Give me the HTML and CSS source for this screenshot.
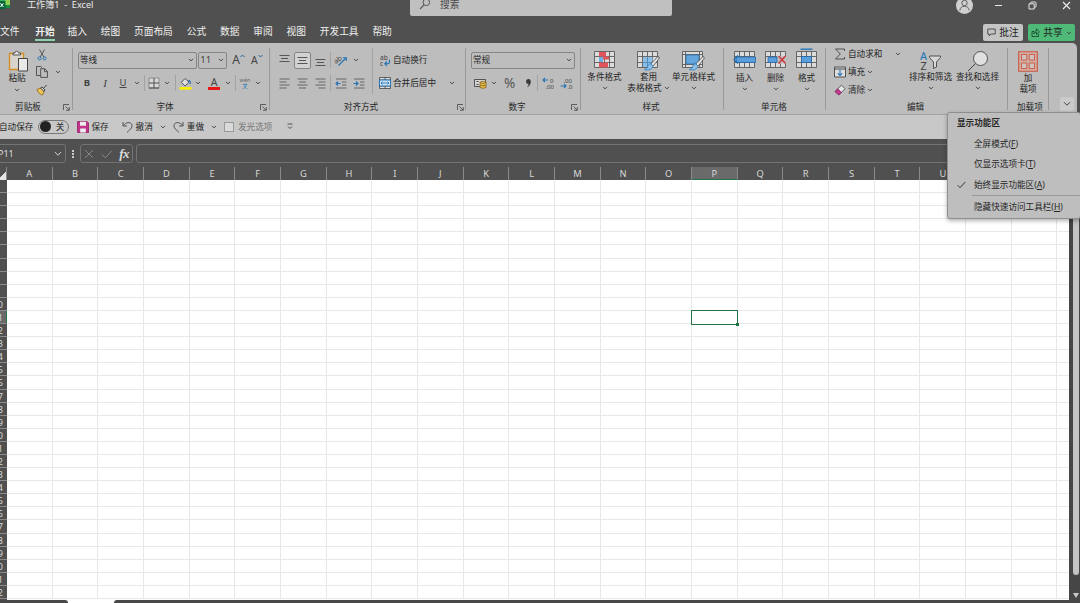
FILE: index.html
```html
<!DOCTYPE html>
<html lang="zh-CN">
<head>
  <meta charset="UTF-8" />
  <meta name="viewport" content="width=device-width, initial-scale=1.0"/>
  <title>工作簿1 - Excel</title>
  <link rel="stylesheet" href="styles.css">
</head>
<body>

  <!-- Shared icons -->
  <svg class="sprite" aria-hidden="true">
    <symbol id="chev" viewBox="0 0 6 4"><path d="M1 .9 3 2.9 5 .9" fill="none" stroke="#3a3a3a" stroke-width=".9"/></symbol>
    <symbol id="launch" viewBox="0 0 7 7"><path d="M.5 6V.5H6M2.500 2.500 6 6M6.300 3v3.300H3" fill="none" stroke="#444" stroke-width=".8"/></symbol>
    <symbol id="table" viewBox="0 0 21 17"><path d="M.5.5h20v16H.5z" fill="#dcdcdc"/><path d="M.5.5h20v16H.5zM.5 5.500h20M.5 11.500h20M5.500.5v16M10.500.5v16M15.500.5v16" fill="none" stroke="#5a5a5a" stroke-width=".9"/></symbol>
    <symbol id="brush" viewBox="0 0 16 15"><path d="M14.300.700 7.300 8l2.200 2.200L15.700 2.500q.3-2-1.400-1.800z" fill="#e2e2e2" stroke="#4a4a4a" stroke-width=".8"/><path d="M7.300 8C5 8 4.400 9.400 4 11c-.3 1.600-1.500 2-3.300 2.400 2 1.200 7.700 1.200 8.800-3.200z" fill="#8cc0e8" stroke="#2f7fbf" stroke-width=".8"/></symbol>
  </svg>

  <!-- Title bar -->
  <header class="titlebar">
    <svg class="logo" width="11" height="10" viewBox="0 0 11 10"><path d="M0 0h10v5H0z" fill="#8fd14f"/><path d="M0 0h5v5H0z" fill="#32b35a"/><path d="M0 5h10v3H0z" fill="#1b8b45"/><path d="M0 1h5.500v8H0z" fill="#08673a"/><path d="m.4 3.300 3 3.700m0-3.700-3 3.700" stroke="#fff" stroke-width="1"/></svg>
    <div class="doc-title">工作簿1 &nbsp;-&nbsp; Excel</div>
    <div class="search">
      <svg width="12" height="12" viewBox="0 0 12 12"><circle cx="7.300" cy="4.300" r="3.300" fill="none" stroke="#555" stroke-width="1"/><path d="M5 6.900 1 11" stroke="#555" stroke-width="1.100"/></svg>
      <span>搜索</span>
    </div>
    <div class="window-controls">
      <svg class="avatar" width="17" height="17" viewBox="0 0 17 17"><circle cx="8.500" cy="8.500" r="8.500" fill="#cfcfcf"/><circle cx="8.500" cy="6" r="2.700" fill="none" stroke="#555" stroke-width=".9"/><path d="M3.800 13.500c.4-3 2.200-4.300 4.700-4.300s4.300 1.300 4.700 4.300" fill="none" stroke="#555" stroke-width=".9"/></svg>
      <svg width="9" height="9" viewBox="0 0 9 9"><path d="M1 4.500h7" stroke="#e8e8e8"/></svg>
      <svg width="9" height="9" viewBox="0 0 9 9"><path d="M1 2.800h5.200V8H1zM2.800 2.600V1.500q0-.5.500-.5h3.700q1 0 1 1v3.700q0 .5-.5.500H6.400" fill="none" stroke="#e8e8e8"/></svg>
      <svg width="9" height="9" viewBox="0 0 9 9"><path d="m1 1 7 7m0-7L1 8" stroke="#eee" stroke-width="1.100"/></svg>
    </div>
  </header>

  <!-- Ribbon tabs -->
  <nav class="tabs">
    <span>文件</span>
    <span class="active">开始</span>
    <span>插入</span>
    <span>绘图</span>
    <span>页面布局</span>
    <span>公式</span>
    <span>数据</span>
    <span>审阅</span>
    <span>视图</span>
    <span>开发工具</span>
    <span>帮助</span>
    <div class="tab-actions">
      <button class="btn-comment">
        <svg width="9" height="9" viewBox="0 0 9 9"><path d="M.8 1h7.400v5H4L2.200 7.800V6H.8z" fill="none" stroke="#333" stroke-width=".8"/></svg>批注
      </button>
      <button class="btn-share">
        <svg width="9" height="9" viewBox="0 0 9 9"><path d="M3 3.500H1v5h6.500V6M2.800 6C3 3.600 4.200 3 5.500 3V1l3 2.800-3 2.700v-2C4.300 4.500 3.500 4.900 2.800 6z" fill="none" stroke="#173d27" stroke-width=".8"/></svg>共享
        <svg width="6" height="4"><use href="#chev"/></svg>
      </button>
    </div>
  </nav>

  <!-- Ribbon -->
  <section class="ribbon">
    <div class="group clipboard">
      <div class="clip-body">
        <div class="paste">
          <svg width="21" height="22" viewBox="0 0 21 22"><path d="M1.500 3.500h14v16h-14z" fill="#d8d4cb" stroke="#d58e22" stroke-width="1.400"/><path d="M5 5V3h2c.3-2.500 3-2.500 3.400 0h2v2z" fill="#e8e8e8" stroke="#444" stroke-width=".9"/><path d="M10.500 8.500h9v12.500h-9z" fill="#e9e9e9" stroke="#444"/></svg>
          <span>粘贴</span>
          <svg width="6" height="4"><use href="#chev"/></svg>
        </div>
        <div class="clip-tools">
          <svg width="10" height="12" viewBox="0 0 10 12"><path d="M2.500.5 6.800 8M7.500.5 3.200 8" stroke="#4a4a4a" stroke-width=".9"/><circle cx="2.500" cy="9.400" r="1.500" fill="none" stroke="#2474b5"/><circle cx="7.500" cy="9.400" r="1.500" fill="none" stroke="#2474b5"/></svg>
          <span></span>
          <svg width="12" height="12" viewBox="0 0 12 12"><path d="M4.500 9.500h-4V.5h4.300L6 1.700M4.700 2.700h4l2.800 2.700v6H4.700zM8.500 2.800v2.900h3" fill="none" stroke="#4a4a4a" stroke-width=".9"/></svg>
          <svg width="6" height="4"><use href="#chev"/></svg>
          <svg width="12" height="12" viewBox="0 0 12 12"><path d="M1 5.500 4.500 4 8 7.500 6.500 11C4 10.600 2 8.500 1 5.500z" fill="#f0c65a" stroke="#8a6210" stroke-width=".8"/><path d="m4.500 4 1.600-1 2.900 3L8 7.500zM7.500 4.300 10.700 1" fill="#ddd" stroke="#444"/></svg>
        </div>
      </div>
      <div class="group-label"><span>剪贴板</span><svg width="7" height="7"><use href="#launch"/></svg></div>
    </div>

    <div class="group font">
      <div class="row">
        <div class="select font-name">等线<svg width="6" height="4"><use href="#chev"/></svg></div>
        <div class="select font-size">11<svg width="6" height="4"><use href="#chev"/></svg></div>
        <span class="grow-font">A<svg width="5" height="4" viewBox="0 0 5 4"><path d="m.5 3 2-2 2 2" fill="none" stroke="#2467a5"/></svg></span>
        <span class="grow-font small">A<svg width="5" height="4" viewBox="0 0 5 4"><path d="m.5 1 2 2 2-2" fill="none" stroke="#2467a5"/></svg></span>
      </div>
      <div class="row font-tools">
        <b>B</b>
        <em>I</em>
        <u>U</u>
        <svg width="6" height="4"><use href="#chev"/></svg>
        <i class="sep"></i>
        <svg width="12" height="12" viewBox="0 0 12 12"><path d="M1 1h10v10H1z" fill="#d6d6d6" stroke="#777" stroke-width=".7"/><path d="M6 1v10M1 6h10M1 11h10" stroke="#444" stroke-width=".9"/></svg>
        <svg width="6" height="4"><use href="#chev"/></svg>
        <i class="sep"></i>
        <svg width="13" height="13" viewBox="0 0 13 13"><path d="m6 1.500 4 3.700L6 9 2.300 5.300z" fill="#ddd" stroke="#444" stroke-width=".9"/><path d="M9.300 3.500c2 .2 2.200 2 1.800 3.700" fill="none" stroke="#2474b5" stroke-width="1.300"/><path d="M.5 10h12v2.700H.5z" fill="#f5f000"/></svg>
        <svg width="6" height="4"><use href="#chev"/></svg>
        <span class="font-color">A</span>
        <svg width="6" height="4"><use href="#chev"/></svg>
        <i class="sep"></i>
        <span class="phonetic"><small>wén</small><small>文</small></span>
        <svg width="6" height="4"><use href="#chev"/></svg>
      </div>
      <div class="group-label"><span>字体</span><svg width="7" height="7"><use href="#launch"/></svg></div>
    </div>

    <div class="group align">
      <div class="align-body">
        <div class="align-grid">
          <svg width="11" height="11" viewBox="0 0 11 11"><path d="M.5 .5h10M2 3.500h7M.5 6.500h10" stroke="#555"/></svg>
          <span class="boxed"><svg width="11" height="11" viewBox="0 0 11 11"><path d="M.5 2.500h10M2 5.500h7M.5 8.500h10" stroke="#555"/></svg></span>
          <svg width="11" height="11" viewBox="0 0 11 11"><path d="M.5 4.500h10M2 7.500h7M.5 10.500h10" stroke="#555"/></svg>
          <i class="sep"></i>
          <svg width="12" height="12" viewBox="0 0 12 12"><text x="-1" y="8" font-size="7" fill="#444" transform="rotate(-35 3 6)">ab</text><path d="M3.500 11.500 11 4M8 3.700h3.300V7" fill="none" stroke="#2474b5" stroke-width="1.100"/></svg>
          <svg width="6" height="4"><use href="#chev"/></svg>

          <svg width="11" height="11" viewBox="0 0 11 11"><path d="M.5 1h10M.5 4h7M.5 7h10M.5 10h7" stroke="#666"/></svg>
          <svg width="11" height="11" viewBox="0 0 11 11"><path d="M.5 1h10M2 4h7M.5 7h10M2 10h7" stroke="#666"/></svg>
          <svg width="11" height="11" viewBox="0 0 11 11"><path d="M.5 1h10M3.500 4h7M.5 7h10M3.500 10h7" stroke="#666"/></svg>
          <i class="sep"></i>
          <svg width="12" height="11" viewBox="0 0 12 11"><path d="M1 1h10.500M7 4h4.500M7 7h4.500M1 10h10.500" stroke="#666"/><path d="M5.500 5.500H1M3 3.500l-2 2 2 2" fill="none" stroke="#2474b5" stroke-width="1.100"/></svg>
          <svg width="12" height="11" viewBox="0 0 12 11"><path d="M1 1h10.500M7 4h4.500M7 7h4.500M1 10h10.500" stroke="#666"/><path d="M.5 5.500H5M3 3.500l2 2-2 2" fill="none" stroke="#2474b5" stroke-width="1.100"/></svg>
        </div>
        <i class="sep tall"></i>
        <div class="align-side">
          <div class="row">
            <svg width="12" height="13" viewBox="0 0 12 13"><text x="1" y="5.800" font-size="6.500" fill="#444">ab</text><text x="1" y="12" font-size="6.500" fill="#444">c</text><path d="M10.500 5.500v2.300q0 2-2 2H6M8 7.500 5.800 9.800 8 12" fill="none" stroke="#2474b5" stroke-width="1.100"/></svg>
            <span>自动换行</span>
          </div>
          <div class="row">
            <svg width="12" height="12" viewBox="0 0 12 12"><path d="M.5.5h11v11H.5zM.5 3h11M.5 9h11M6 .5V3M6 9v2.500" fill="#dcdcdc" stroke="#444" stroke-width=".8"/><path d="M.5 3h11v6H.5z" fill="#d3e4f2" stroke="#2474b5"/><path d="M2 6h8M3.500 4.500 2 6l1.500 1.500M8.500 4.500 10 6 8.500 7.500" fill="none" stroke="#2474b5" stroke-width=".9"/></svg>
            <span>合并后居中</span>
            <svg class="push" width="6" height="4"><use href="#chev"/></svg>
          </div>
        </div>
      </div>
      <div class="group-label"><span>对齐方式</span><svg width="7" height="7"><use href="#launch"/></svg></div>
    </div>

    <div class="group number">
      <div class="row"><div class="select">常规<svg width="6" height="4"><use href="#chev"/></svg></div></div>
      <div class="row number-tools">
        <svg width="13" height="11" viewBox="0 0 13 11"><path d="M.5 1.500h11v7H.5z" fill="#d6d6d6" stroke="#444" stroke-width=".9"/><path d="M2.500 3.500h2M2.500 6.500h2" stroke="#444"/><ellipse cx="9" cy="4.500" rx="3" ry="1.200" fill="#efd27a" stroke="#7b5a10" stroke-width=".7"/><path d="M6 4.500v5q3 1.700 6 0v-5q-3 1.700-6 0zM6 7q3 1.700 6 0" fill="#e6bc4d" stroke="#7b5a10" stroke-width=".7"/></svg>
        <svg width="6" height="4"><use href="#chev"/></svg>
        <span class="percent">%</span>
        <svg width="7" height="10" viewBox="0 0 7 10"><path d="M5.800 3.200q.3 4-3.800 6 1.500-1.700 1.600-3.300A2.400 2.400 0 1 1 5.800 3.200z" fill="#3a3a3a"/></svg>
        <i class="sep"></i>
        <svg width="13" height="12" viewBox="0 0 13 12"><text x="8" y="5.500" font-size="6" fill="#444">0</text><text x="3.500" y="11.500" font-size="6" fill="#444">.00</text><path d="M6 3H1M3 1 1 3l2 2" fill="none" stroke="#2474b5" stroke-width="1.100"/></svg>
        <svg width="13" height="12" viewBox="0 0 13 12"><text x="3.500" y="5.500" font-size="6" fill="#444">.00</text><text x="7.500" y="11.500" font-size="6" fill="#444">.0</text><path d="M.5 9H6M4 7l2 2-2 2" fill="none" stroke="#2474b5" stroke-width="1.100"/></svg>
      </div>
      <div class="group-label"><span>数字</span><svg width="7" height="7"><use href="#launch"/></svg></div>
    </div>

    <div class="group styles">
      <div class="big-row">
        <div class="big">
          <svg width="21" height="20" viewBox="0 0 21 20"><use href="#table" width="21" height="17"/><path d="M5 1h7v4.500H5zM5 11.500h9v5H5z" fill="#e2545b"/><path d="M8 5.500h7v3H8z" fill="#e2545b"/><path d="M5 6h4v5H5z" fill="#6baedf"/></svg>
          <span>条件格式</span>
          <svg width="6" height="4"><use href="#chev"/></svg>
        </div>
        <div class="big">
          <svg width="23" height="20" viewBox="0 0 23 20"><use href="#table" width="21" height="17"/><path d="M6 6h9.500v10H6z" fill="#8dbfe6"/><path d="M5.500 11.500h10M10.500 5.500v11" stroke="#4c86b5" stroke-width=".9"/><use href="#brush" x="6" y="5" width="17" height="15"/></svg>
          <span>套用</span>
          <span class="second">表格格式<svg width="6" height="4"><use href="#chev"/></svg></span>
        </div>
        <div class="big">
          <svg width="23" height="20" viewBox="0 0 23 20"><path d="M.5.5h20v16H.5zM.5 3.500h20M.5 13.500h20M3.500.5v16M17.500.5v16" fill="#dcdcdc" stroke="#5a5a5a" stroke-width=".9"/><path d="M4 4h13v9H4z" fill="#62a6dd" stroke="#2d6ca3" stroke-width=".7"/><use href="#brush" x="6" y="5" width="17" height="15"/></svg>
          <span>单元格样式</span>
          <svg width="6" height="4"><use href="#chev"/></svg>
        </div>
      </div>
      <div class="group-label"><span>样式</span></div>
    </div>

    <div class="group cells">
      <div class="big-row">
        <div class="big">
          <svg width="23" height="20" viewBox="0 0 23 20"><use href="#table" x="1" width="21" height="17"/><path d="M3 6h19.500v5.500H3z" fill="#5a9fdb" stroke="#2467a5" stroke-width=".8"/><path d="M5 4.500 1 8.500l4 4" fill="none" stroke="#1f6aaa" stroke-width="1.200"/></svg>
          <span>插入</span>
          <svg width="6" height="4"><use href="#chev"/></svg>
        </div>
        <div class="big">
          <svg width="23" height="20" viewBox="0 0 23 20"><use href="#table" x="1" width="21" height="17"/><path d="M13 5h10v7.500H13z" fill="#bdbdbd"/><path d="M4 6h9v5.500H4z" fill="#5a9fdb" stroke="#2467a5" stroke-width=".8"/><path d="m14.500 5 7 7.500m0-7.500-7 7.500" stroke="#cf3034" stroke-width="1.300"/></svg>
          <span>删除</span>
          <svg width="6" height="4"><use href="#chev"/></svg>
        </div>
        <div class="big">
          <svg width="21" height="20" viewBox="0 0 21 20"><use href="#table" width="21" height="17"/><path d="M5.500 5.500h10v6h-10z" fill="#5a9fdb" stroke="#2467a5" stroke-width=".8"/><path d="M4.500-1.800h12" stroke="#2474b5" stroke-width="1.400"/></svg>
          <span>格式</span>
          <svg width="6" height="4"><use href="#chev"/></svg>
        </div>
      </div>
      <div class="group-label"><span>单元格</span></div>
    </div>

    <div class="group editing">
      <div class="edit-body">
        <div class="edit-list">
          <div><svg width="12" height="12" viewBox="0 0 12 12"><path d="M10.500 3V1H1.500l4.800 5-4.800 5h9V9" fill="none" stroke="#444" stroke-width=".9"/></svg><span>自动求和</span><svg class="push" width="6" height="4"><use href="#chev"/></svg></div>
          <div><svg width="12" height="12" viewBox="0 0 12 12"><path d="M.5 1h11v10H.5z" fill="#dedede" stroke="#444" stroke-width=".9"/><path d="M.5 3h11" stroke="#444"/><path d="M6 4v5.500M3.800 7.300 6 9.500l2.200-2.200" fill="none" stroke="#2474b5" stroke-width="1.100"/></svg><span>填充</span><svg width="6" height="4"><use href="#chev"/></svg></div>
          <div><svg width="12" height="12" viewBox="0 0 12 12"><path d="M7.500 1.200 11 4.700 5 11 1 7.500z" fill="#e6e6e6" stroke="#444" stroke-width=".8"/><path d="M3.700 4.800 7.500 8.500 5 11 1 7.500z" fill="#c13a8d" stroke="#8d2465" stroke-width=".8"/></svg><span>清除</span><svg width="6" height="4"><use href="#chev"/></svg></div>
        </div>
        <div class="big">
          <svg width="21" height="20" viewBox="0 0 21 20"><text x="0" y="8.500" font-size="11" fill="#2474b5">A</text><text x="0.500" y="18.500" font-size="11" fill="#444">Z</text><path d="M9.500 5h11v1.500l-4 4.500v5l-3 1.500V11l-4-4.500z" fill="#d8d8d8" stroke="#444" stroke-width=".9"/></svg>
          <span>排序和筛选</span>
          <svg width="6" height="4"><use href="#chev"/></svg>
        </div>
        <div class="big">
          <svg width="21" height="20" viewBox="0 0 21 20"><circle cx="13.500" cy="7.500" r="7" fill="#e0e0e0" stroke="#444" stroke-width=".9"/><path d="M8.500 12.500 1 20" stroke="#444"/></svg>
          <span>查找和选择</span>
          <svg width="6" height="4"><use href="#chev"/></svg>
        </div>
      </div>
      <div class="group-label"><span>编辑</span></div>
    </div>

    <div class="group addins">
      <div class="big">
        <svg width="20" height="21" viewBox="0 0 20 21"><path d="M.7.700h18.600v19.600H.7z" fill="#d3aca2" stroke="#cc5540" stroke-width="1.100"/><path d="M3.500 3.500h5.300V9H3.500zM11.200 3.500h5.300V9h-5.300zM3.500 12h5.300v5.500H3.500zM11.200 12h5.300v5.500h-5.300z" fill="#d0c4c1" stroke="#cc5540" stroke-width=".9"/></svg>
        <span>加</span>
        <span class="second">载项</span>
      </div>
      <div class="group-label"><span>加载项</span></div>
    </div>

    <button class="collapse" aria-label="功能区显示选项"><svg width="8" height="6" viewBox="0 0 8 6"><path d="m1 1.200 3 3 3-3" fill="none" stroke="#333" stroke-width=".9"/></svg></button>
  </section>

  <!-- Quick access toolbar -->
  <section class="quick">
    <span class="autosave">自动保存</span>
    <span class="toggle">关</span>
    <svg width="12" height="12" viewBox="0 0 12 12"><path d="M.5.500h9.500L11.500 2v9.500H.5z" fill="#c2338a" stroke="#8f1e64" stroke-width=".8"/><path d="M3 .8h6v4H3zM3.200 7.500h5.600v4H3.200z" fill="#ededed"/></svg>
    <span class="q-save">保存</span>
    <svg width="11" height="12" viewBox="0 0 11 12"><path d="M1 1v4h4M1.300 4.700C4 .8 8.500.8 9.800 3.500c1 2.500-.8 4.200-4.800 8" fill="none" stroke="#444" stroke-width=".9"/></svg>
    <span class="q-undo">撤消</span>
    <svg width="6" height="4"><use href="#chev"/></svg>
    <svg class="q-redo" width="11" height="12" viewBox="0 0 11 12"><path d="M10 1v4H6M9.700 4.700C7 .8 2.500.8 1.200 3.500c-1 2.500.8 4.200 4.800 8" fill="none" stroke="#444" stroke-width=".9"/></svg>
    <span class="q-redo-text">重做</span>
    <svg width="6" height="4"><use href="#chev"/></svg>
    <i class="check"></i>
    <span class="muted">发光选项</span>
    <svg width="6" height="7" viewBox="0 0 6 7"><path d="M.5 1h5M1 3.500l2 2 2-2" fill="none" stroke="#444" stroke-width=".9"/></svg>
  </section>

  <!-- Formula bar -->
  <section class="formula">
    <div class="name-box">P11<svg width="8" height="6" viewBox="0 0 8 6"><path d="m1 1 3 3.300L7 1" fill="none" stroke="#ccc"/></svg></div>
    <i class="dots"></i>
    <div class="fx-box">
      <svg width="10" height="10" viewBox="0 0 10 10"><path d="m1 1 8 8m0-8L1 9" stroke="#8c8c8c" stroke-width=".9"/></svg>
      <svg width="12" height="10" viewBox="0 0 12 10"><path d="m1 5.500 3.300 3.300L11 1.500" fill="none" stroke="#8c8c8c" stroke-width=".9"/></svg>
      <em>fx</em>
    </div>
    <div class="formula-input"></div>
  </section>

  <!-- Sheet -->
  <main class="sheet">
    <div class="col-heads" id="colHeads"><span class="corner"></span></div>
    <div class="sheet-body">
      <div class="row-heads" id="rowHeads"></div>
      <div class="cells-grid" id="cells"></div>
    </div>
    <div class="scrollbar">
      <div class="thumb"></div>
      <div class="arrow"></div>
    </div>
  </main>
  <footer class="sheet-tabs"><i></i><b></b><i></i></footer>

  <!-- Ribbon display menu -->
  <div class="menu">
    <div class="menu-title">显示功能区</div>
    <div class="menu-item">全屏模式(<u>F</u>)</div>
    <div class="menu-item">仅显示选项卡(<u>T</u>)</div>
    <div class="menu-item checked"><svg width="9" height="8" viewBox="0 0 9 8"><path d="M.7 4.300 3 6.700 8.300 1" fill="none" stroke="#333"/></svg>始终显示功能区(<u>A</u>)</div>
    <hr>
    <div class="menu-item">隐藏快速访问工具栏(<u>H</u>)</div>
  </div>

  <script>
    const COLS = 24;
    const ROWS = 32;
    const active = { col: 15, row: 10 };

    const colHeads = document.getElementById('colHeads');
    const rowHeads = document.getElementById('rowHeads');
    const cells = document.getElementById('cells');

    // Column letters
    for (let c = 0; c < COLS; c++) {
      const head = document.createElement('span');
      head.textContent = c < 23 ? String.fromCharCode(65 + c) : '';
      if (c === active.col) head.className = 'selected';
      colHeads.appendChild(head);
    }

    // Row numbers
    for (let r = 0; r < ROWS; r++) {
      const head = document.createElement('span');
      head.textContent = r < 9 ? '' : r + 1;
      if (r === active.row) head.className = 'selected';
      rowHeads.appendChild(head);
    }

    // Cells
    for (let i = 0; i < COLS * ROWS; i++) {
      const cell = document.createElement('div');
      if (i === active.row * COLS + active.col) cell.className = 'active-cell';
      cells.appendChild(cell);
    }
  </script>

</body>
</html>
```
FILE: styles.css
```css
:root {
  --dark: #505050;
  --ribbon: #bdbdbd;
  --quick: #c8c8c8;
  --line: #9a9a9a;
  --text: #262626;
  --green: #217346;
}

* {
  box-sizing: border-box;
  margin: 0;
  padding: 0;
}

body {
  width: 1080px;
  height: 603px;
  overflow: hidden;
  position: relative;
  display: flex;
  flex-direction: column;
  background: var(--dark);
  color: var(--text);
  font-family: "Noto Sans", "Noto Sans CJK SC", sans-serif;
  font-size: 8.6px;
  line-height: 12px;
  white-space: nowrap;
}

svg {
  display: block;
  flex: none;
  overflow: visible;
}

.sprite {
  width: 0;
  height: 0;
  position: absolute;
}

button {
  border: none;
  font: inherit;
  color: inherit;
}

/* Title bar */
.titlebar {
  height: 22px;
  flex: none;
  display: flex;
  color: #e8e8e8;
}

.doc-title {
  width: 383px;
  margin-left: 16px;
  font-size: 9.1px;
  line-height: 9px;
}

.search {
  width: 262px;
  height: 16px;
  padding-left: 9px;
  display: flex;
  gap: 9px;
  background: #c0c0c0;
  border-radius: 0 0 2px 2px;
  color: #4a4a4a;
  font-size: 9.7px;
  line-height: 9px;
}

.search svg {
  margin-top: -2px;
}

.window-controls {
  margin-left: auto;
  padding-right: 9px;
  height: 10px;
  display: flex;
  align-items: center;
  gap: 25px;
}

.window-controls .avatar {
  margin-right: -4px;
}

/* Ribbon tabs */
.tabs {
  height: 21px;
  flex: none;
  display: flex;
  gap: 13.9px;
  color: #f0f0f0;
  font-size: 9.7px;
  line-height: 20px;
}

.tabs > span {
  height: 19px;
}

.tabs .active {
  margin-left: 2px;
  margin-right: -1px;
  font-weight: 700;
  border-bottom: 2px solid #8fd0ae;
}

.tab-actions {
  margin-left: auto;
  margin-right: 5px;
  display: flex;
  gap: 5px;
  padding-top: 2px;
}

.tab-actions button {
  height: 17px;
  display: flex;
  align-items: center;
  justify-content: center;
  gap: 3px;
  border-radius: 2px;
  font-size: 9.7px;
  color: #222;
}

.tab-actions .btn-comment {
  width: 40px;
  background: #c4c4c4;
}

.tab-actions .btn-share {
  width: 47px;
  background: #4fb978;
}

/* Ribbon */
.ribbon {
  width: 1077px;
  height: 72px;
  flex: none;
  display: flex;
  background: var(--ribbon);
  border-bottom: 1px solid #a2a2a2;
  border-top-right-radius: 5px;
}

.group {
  height: 67px;
  margin-top: 5px;
  display: flex;
  flex-direction: column;
  position: relative;
}

.group::after {
  content: "";
  position: absolute;
  top: 0;
  right: 0;
  width: 1px;
  height: 62px;
  background: var(--line);
}

.group-label {
  height: 14px;
  margin-top: auto;
  margin-bottom: 1px;
  display: grid;
  grid-template-columns: 9px 1fr 9px;
  align-items: center;
}

.group-label span {
  grid-column: 2;
  text-align: center;
}

.row {
  height: 24px;
  display: flex;
  align-items: center;
}

.row + .row {
  height: 22px;
}

.sep {
  width: 1px;
  height: 16px;
  background: #a3a3a3;
}

.sep.tall {
  height: 46px;
}

.select {
  height: 17px;
  padding: 0 2px 0 1px;
  display: flex;
  align-items: center;
  justify-content: space-between;
  border: 1px solid #868686;
  border-radius: 2px;
}

.push {
  margin-left: auto;
}

/* Clipboard */
.clipboard { width: 73px; }

.clip-body {
  display: flex;
  height: 48px;
}

.paste {
  width: 34px;
  display: flex;
  flex-direction: column;
  align-items: center;
}

.paste svg:first-child {
  margin: 2px 0 0 2px;
}

.paste svg:last-child {
  margin-top: 4px;
}

.clip-tools {
  display: grid;
  grid-template-columns: 15px 18px;
  grid-template-rows: 14px 20px 16px;
  place-items: center;
}

.clipboard .group-label {
  padding-right: 1px;
}

.clipboard .group-label span {
  margin-right: 16px;
}

/* Font */
.font { width: 197px; padding-left: 5px; }
.font .group-label { margin-left: -5px; padding-right: 1px; }
.font .group-label span { padding-right: 12px; }

.font-name {
  width: 120px;
  margin-right: 1px;
}

.font-size {
  width: 29px;
  margin-right: 5px;
  color: #444;
  font-size: 9.5px;
}

.grow-font {
  width: 19px;
  display: flex;
  color: #444;
  font-size: 12px;
}

.grow-font.small {
  font-size: 10.5px;
}

.font-tools {
  display: grid;
  grid-template-columns: 18px 18px 18px 9px 7px 11px 16px 1px 18px 8px 24px 4px 10px 10px 16px;
  justify-items: center;
  justify-content: start;
  align-items: center;
  color: #444;
  font-size: 9.5px;
}

.font-tools em {
  font-family: "Liberation Serif", serif;
  font-size: 11px;
}

.font-color {
  width: 12px;
  height: 13px;
  border-bottom: 3px solid #e81515;
  font-size: 10.5px;
  line-height: 10px;
  text-align: center;
}

.phonetic {
  display: flex;
  flex-direction: column;
  align-items: center;
}

.phonetic small {
  font-size: 5.5px;
  line-height: 6px;
  color: #666;
}

.phonetic small + small {
  color: #2474b5;
}

/* Alignment */
.align { width: 196px; }
.align .group-label span { padding-right: 14px; }

.align-body {
  display: flex;
  height: 46px;
  padding-left: 5px;
}

.align-grid {
  width: 97px;
  display: grid;
  grid-template-columns: 18px 18px 19px 1px 19px 18px;
  grid-template-rows: 24px 22px;
  place-items: center;
  justify-content: start;
}

.align-grid use {
  transform: translateX(-3px);
}

.boxed {
  width: 17px;
  height: 17px;
  display: grid;
  place-items: center;
  background: #d2d2d2;
  border: 1px solid #858585;
  border-radius: 2px;
}

.align-side {
  width: 82px;
  padding-left: 6px;
}

.align-side .row {
  gap: 2px;
}

/* Number */
.number { width: 115px; padding-left: 5px; }
.number .group-label { margin-left: -5px; padding-right: 1px; }
.number .group-label span { padding-right: 12px; }

.number .select {
  width: 104px;
}

.number-tools {
  display: grid;
  grid-template-columns: 18px 9px 23px 14px 5px 16px 20px;
  justify-items: center;
  justify-content: start;
}

.percent {
  font-size: 13.5px;
  color: #555;
}

/* Large buttons */
.big-row {
  display: flex;
}

.big {
  display: flex;
  flex-direction: column;
  align-items: center;
}

.big > svg:first-child {
  margin: 3px 0 0;
}

.big > svg:last-child {
  margin-top: 3px;
}

.big .second {
  display: flex;
  align-items: center;
  gap: 2px;
  line-height: 10px;
}

.styles { width: 143px; }
.styles .big { width: 45px; }
.styles .big:first-child { margin: 0 -1px 0 1px; }
.styles .group-label { margin-left: -3px; }

.cells { width: 102px; padding-left: 5px; }
.cells .big { width: 31px; }
.cells .big > svg:first-child { margin-bottom: 1px; }
.cells .group-label { margin-left: -7px; }

/* Editing */
.editing { width: 182px; }
.editing .group-label { margin-left: -3px; }

.edit-body {
  display: flex;
}

.edit-list {
  width: 74px;
  margin-right: 6px;
  margin-left: 1px;
  padding: 0 0 0 7px;
  margin-top: -3px;
}

.edit-list div {
  height: 18px;
  display: flex;
  align-items: center;
  gap: 2px;
}

.editing .big {
  width: 47px;
}

.addins { width: 41px; }

.addins .big {
  height: 48px;
  margin-right: 1px;
}

.addins .group-label {
  margin-right: 2px;
}

.collapse {
  width: 14px;
  height: 14px;
  margin: 54px 0 0 11px;
  display: grid;
  place-items: center;
  background: #cbcbcb;
  border-radius: 2px;
}

/* Quick access toolbar */
.quick {
  height: 24px;
  padding-bottom: 1px;
  flex: none;
  display: flex;
  align-items: center;
  background: var(--quick);
}

.autosave {
  margin-left: -1px;
  margin-right: 5px;
}

.toggle {
  width: 31px;
  height: 14px;
  margin-right: 8px;
  padding: 0 4px 0 1px;
  display: flex;
  align-items: center;
  justify-content: space-between;
  border: 1px solid #777;
  border-radius: 7px;
}

.toggle::before {
  content: "";
  width: 11px;
  height: 11px;
  background: #222;
  border-radius: 50%;
}

.q-save { margin: 0 13px 0 2px; }
.q-undo { margin: 0 7px 0 3px; }
.q-redo { margin-left: 7px; }
.q-redo-text { margin: 0 7px 0 3px; }

.check {
  width: 10px;
  height: 10px;
  margin: 0 4px 0 7px;
  background: #dadada;
  border: 1px solid #999;
}

.muted {
  margin-right: 15px;
  color: #777;
}

/* Formula bar */
.formula {
  height: 28px;
  padding-top: 5px;
  flex: none;
  display: flex;
  color: #ddd;
}

.formula > div {
  height: 19px;
  display: flex;
  align-items: center;
  border: 1px solid #737373;
  border-radius: 3px;
}

.formula .name-box {
  width: 69px;
  margin-left: -3px;
  padding-right: 3px;
  justify-content: space-between;
  font-size: 9px;
}

.dots {
  width: 2px;
  height: 8px;
  margin: 6px 6px 0;
  background: repeating-linear-gradient(#ccc 0 2px, transparent 2px 3px);
}

.formula .fx-box {
  width: 53px;
  margin-right: 3px;
  padding: 0 3px;
  justify-content: space-between;
}

.fx-box em {
  font: italic bold 13px "Liberation Serif", serif;
  letter-spacing: -0.5px;
}

.formula .formula-input {
  flex: 1;
  margin-right: -4px;
}

/* Sheet */
.sheet {
  height: 433px;
  flex: none;
  display: grid;
  grid-template-columns: 1069px 11px;
  grid-template-rows: 13px 420px;
}

.col-heads {
  grid-column: 1 / 3;
  display: grid;
  grid-template-columns: 7px repeat(24, 45.68px);
  overflow: hidden;
  color: #d8d8d8;
  font-size: 9.3px;
  line-height: 14px;
  text-align: center;
}

.col-heads span {
  height: 13px;
  border-right: 1px solid #8a8a8a;
}

.col-heads .selected {
  background: #6a6a6a;
  border-bottom: 1px solid var(--green);
}

.col-heads .corner {
  background: linear-gradient(135deg, transparent 55%, #e2e2e2 55%);
}

.sheet-body {
  display: flex;
  overflow: hidden;
  background: #fff;
}

.row-heads {
  width: 7px;
  flex: none;
  display: grid;
  grid-template-rows: repeat(32, 13.1px);
  background: var(--dark);
  overflow: hidden;
}

.row-heads span {
  width: 7px;
  padding-right: 4px;
  display: flex;
  justify-content: flex-end;
  border-bottom: 1px solid #8a8a8a;
  color: #d8d8d8;
  font-size: 9px;
  line-height: 14px;
}

.row-heads .selected {
  background: #6a6a6a;
  border-right: 1px solid var(--green);
  padding-right: 3px;
}

.cells-grid {
  flex: none;
  display: grid;
  grid-template-columns: repeat(24, 45.68px);
  grid-template-rows: repeat(32, 13.1px);
}

.cells-grid div {
  border-right: 1px solid #e8e8e8;
  border-bottom: 1px solid #e8e8e8;
}

.cells-grid .active-cell {
  margin: -1px 0 -1px -1px;
  border: 1px solid var(--green);
  position: relative;
}

.active-cell::after {
  content: "";
  position: absolute;
  right: -2px;
  bottom: -2px;
  width: 3px;
  height: 3px;
  background: var(--green);
}

.scrollbar {
  padding-left: 4px;
  background: #464646;
}

.thumb {
  width: 6px;
  height: 395px;
  background: #c4c4c4;
  border-radius: 3px;
}

.arrow {
  width: 6px;
  margin-top: 18px;
  border: 3px solid transparent;
  border-top: 5px solid #c8c8c8;
  border-bottom: none;
}

/* Sheet tab strip */
.sheet-tabs {
  height: 3px;
  display: flex;
  background: #fff;
}

.sheet-tabs i {
  width: 68px;
  background: #484848;
  border-top-right-radius: 3px;
}

.sheet-tabs b {
  width: 46px;
}

.sheet-tabs i:last-child {
  flex: 1;
  border-radius: 3px 0 0 0;
}

/* Ribbon display menu */
.menu {
  position: absolute;
  left: 947px;
  top: 112px;
  width: 134px;
  height: 107px;
  padding-top: 4px;
  background: #bebebe;
  border: 1px solid #8e8e8e;
  border-radius: 3px;
  box-shadow: 0 2px 4px rgba(0, 0, 0, 0.3);
}

.menu-title {
  padding-left: 9px;
  font-weight: 700;
}

.menu-item {
  height: 20.5px;
  padding-left: 26px;
  display: flex;
  align-items: center;
}

.menu-title + .menu-item {
  margin-top: 4.5px;
}

.menu-item.checked svg {
  margin: 0 8px 0 -17px;
}

.menu hr {
  margin: 0 0 1px 24px;
  border: none;
  border-top: 1px solid #999;
}
```
